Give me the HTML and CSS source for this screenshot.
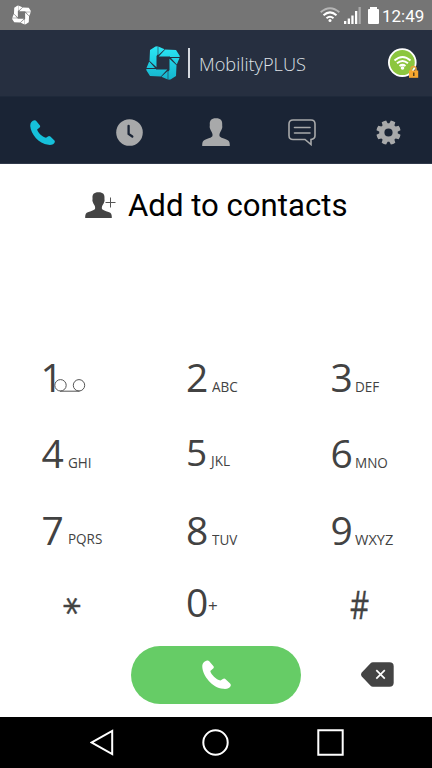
FILE: index.html
```html
<!DOCTYPE html>
<html lang="en">
<head>
<meta charset="utf-8">
<title>MobilityPLUS</title>
<link rel="stylesheet" href="styles.css">
</head>
<body>
<svg class="defs" width="0" height="0">
  <defs>
    <linearGradient id="cyan" gradientUnits="userSpaceOnUse" x1="0" y1="0" x2="0" y2="34"><stop offset="0" stop-color="#2be7f6"/><stop offset="1" stop-color="#14b3cc"/></linearGradient>
    <symbol id="mark" viewBox="0 0 34 34">
      <path d="M4 4 9.500.5 11.700.2V8.500L10.500 10V21.300L3.500 14.800zM12.300.5 18.600 3.200 12.300 9z"/>
      <path d="M30 4 33.500 9.500 33.800 11.100H24V10.500H12.700L19.200 3.500zM33.500 12 30.800 18.600 25 12z"/>
      <path d="M30 30 24.500 33.500 22.300 33.800V25.500L23.500 24V12.700L30.500 19.200zM21.700 33.500 15.400 30.800 21.700 25z"/>
      <path d="M4 30 .5 24.500 .2 22.900H10V23.500H21.300L14.800 30.500zM.5 22 3.200 15.400 9 22z"/>
    </symbol>
    <symbol id="phone" viewBox="0 0 28 28">
      <path d="M5.200 .4C2 .8 0 3.300.3 7 .8 15 9.500 26.800 20.500 27.800c3.800.4 6.700-.7 7.300-3.300.1-.7-.2-1.200-.7-1.700l-4.300-4.300c-.9-.9-1.800-.9-2.700-.1l-2.200 1.400C13.500 18.800 8.800 14 8 10.500L10.800 8.300c.8-.8.8-1.700.1-2.500L7 1.100C6.400.5 5.900.3 5.200.4z"/>
    </symbol>
    <symbol id="person" viewBox="0 0 28 28">
      <path d="M14 .3c-5 0-6.500 2.500-6.200 6.300.1 1.500-.4 2.100.1 3.700.4 1.500 1.100 2.700 1.900 3.900.8 1.500 1 3.200.4 4.300-1.700 1.700-6.500 2.500-8.400 3.900C.3 23.600.2 25.500.2 28h27.600c0-2.500-.1-4.400-1.600-5.600-1.900-1.400-6.700-2.200-8.400-3.900-.6-1.100-.4-2.800.4-4.300.8-1.200 1.500-2.400 1.900-3.900.5-1.600 0-2.200.1-3.700C20.500 2.800 19 .3 14 .3z"/>
    </symbol>
  </defs>
</svg>
<div class="screen">
  <div class="status">
    <svg class="status-mark" width="19" height="20"><use href="#mark"/></svg>
    <svg class="status-wifi" width="20" height="16" viewBox="0 0 20 16" fill="none" stroke="#fff" stroke-width="2">
      <path d="M.7 5.300Q10-2.800 19.300 5.300" stroke="#b5b5b5"/><path d="M3.500 8.200Q10 2.500 16.500 8.200M6.500 11.200Q10 8.200 13.500 11.200"/><circle cx="10" cy="13.500" r="1.500" fill="#fff" stroke="none"/>
    </svg>
    <svg class="status-signal" width="17" height="17" viewBox="0 0 17 17" fill="#fff">
      <path d="M0 14h2.300v3H0zM3.700 11.500H6V17H3.700zM7.300 8.500h2.300V17H7.300zM11 4h2.300v13H11z"/><path fill="#aaa" d="M14.500 0h2.300v17h-2.300z"/>
    </svg>
    <svg class="status-battery" width="11" height="17" viewBox="0 0 11 17"><path fill="#fff" d="M2 0h7v2h1q1 0 1 1V16q0 1-1 1H1q-1 0-1-1V3q0-1 1-1h1z"/></svg>
    <span class="clock">12:49</span>
  </div>
  <header class="header">
    <svg class="logo" width="34" height="34"><use href="#mark"/></svg>
    <span class="divider"></span>
    <span class="brand">MobilityPLUS</span>
    <svg class="online" width="31" height="31" viewBox="0 0 31 31">
      <circle cx="14.300" cy="14.600" r="13.400" fill="#8cc63f" stroke="#fff" stroke-width="1.800"/>
      <g fill="none" stroke="#fff" stroke-width="2"><path d="M6.500 12.500Q14.500 5.500 22.500 12.500M9 15.300Q14.500 10.800 20 15.300M11.500 18Q14.500 15.700 17.500 18"/></g>
      <circle cx="14.500" cy="20" r="1.800" fill="#fff"/>
      <path d="M23 23v-2a2.500 2.500 0 0 1 5 0v2" fill="none" stroke="#e9a23b" stroke-width="1.500"/>
      <path d="M21 22.500h9.200v7.300H21z" fill="#f8a72f"/><path d="M25 24.500h1.500v3.500H25z" fill="#56401d"/>
    </svg>
  </header>
  <nav class="tabs">
    <a class="tab active"><svg width="25" height="25" viewBox="0 0 25 25"><use href="#phone" width="25" height="25"/></svg></a>
    <a class="tab"><svg width="27" height="27" viewBox="0 0 27 27"><circle cx="13.500" cy="13.500" r="13.300"/><path d="M12.600 6.800v8.200l3.700 2.500" fill="none" stroke="#1a2435" stroke-width="2.300" stroke-linecap="round"/></svg></a>
    <a class="tab"><svg width="28" height="28"><use href="#person"/></svg></a>
    <a class="tab"><svg width="28" height="27" viewBox="0 0 28 27" fill="none" stroke="#a8a9aa" stroke-width="1.600"><path d="M5 1h18q4 0 4 4v11.500q0 3.500-4 4v5L17 20.500H5q-4 0-4-4V5q0-4 4-4z"/><path d="M6.500 8.500h15.500M6.500 14h15.500" stroke-linecap="round"/></svg></a>
    <a class="tab"><svg width="25" height="25" viewBox="-12.500 -12.500 25 25">
      <circle r="6.700" fill="none" stroke="#a8a9aa" stroke-width="5.200"/>
      <g transform="rotate(22.500)"><path id="pair" d="M-2.800-8-2.400-12q2.400-.6 4.800 0L2.800-8zM-2.800 8-2.400 12q2.400.6 4.800 0L2.800 8z"/><use href="#pair" transform="rotate(45)"/><use href="#pair" transform="rotate(90)"/><use href="#pair" transform="rotate(135)"/></g></svg></a>
  </nav>
  <main class="dialer">
    <div class="add">
      <svg width="31" height="27" viewBox="0 0 31 27"><svg width="27" height="26" preserveAspectRatio="none" viewBox="0 0 28 28"><use href="#person" width="28" height="28"/></svg><path d="M20.500 10.500h10M25.500 5.500v10" stroke="#555" stroke-width="1"/></svg>
      <span>Add to contacts</span>
    </div>
    <div class="keys">
      <div class="key one"><b>1</b><svg class="voicemail" width="32" height="13" viewBox="0 0 32 13" fill="none" stroke="#555" stroke-width="1"><circle cx="6.500" cy="6.300" r="5.700"/><circle cx="25" cy="6.300" r="5.700"/><path d="M6 12.200h19.500"/></svg></div>
      <div class="key"><b>2</b><i>ABC</i></div>
      <div class="key"><b>3</b><i class="near">DEF</i></div>
      <div class="key"><b>4</b><i>GHI</i></div>
      <div class="key five"><b>5</b><i>JKL</i></div>
      <div class="key"><b>6</b><i class="near">MNO</i></div>
      <div class="key seven"><b>7</b><i>PQRS</i></div>
      <div class="key"><b>8</b><i>TUV</i></div>
      <div class="key nine"><b>9</b><i class="near">WXYZ</i></div>
      <div class="key star"><b>*</b></div>
      <div class="key zero"><b>0</b><i>+</i></div>
      <div class="key hash"><b>#</b></div>
    </div>
    <div class="actions">
      <button class="call"><svg width="29" height="29"><use href="#phone"/></svg></button>
      <svg class="erase" width="33" height="25" viewBox="0 0 33 25"><path fill="#444" d="M12 .3h16.500q4.200 0 4.200 4.200v16q0 4.200-4.200 4.200H12q-1.500 0-2.700-1.200L.8 14.500q-1.500-2 0-4L9.300 1.500Q10.500.3 12 .3z"/><path d="M15.300 8.200l8.500 8.500M23.800 8.200l-8.500 8.500" stroke="#fff" stroke-width="1.700"/></svg>
    </div>
  </main>
  <footer class="system">
    <svg width="24" height="27" viewBox="0 0 24 27"><path d="M22.200 2v23L1.800 13.500z"/></svg>
    <svg width="27" height="27" viewBox="0 0 27 27"><circle cx="13.500" cy="13.500" r="12.200"/></svg>
    <svg width="27" height="27" viewBox="0 0 27 27"><path d="M1.300 1.300h24.400v24.400H1.300z"/></svg>
  </footer>
</div>
</body>
</html>
```
FILE: styles.css
```css
* { box-sizing: border-box; }
body { margin: 0; background: #fff; font-family: Roboto, sans-serif; }
svg { display: block; flex: none; }
.defs { position: absolute; }
.screen { width: 432px; height: 768px; display: flex; flex-direction: column; overflow: hidden; }
.status { height: 30px; background: #757575; display: flex; align-items: center; padding: 0 8px 0 12px; color: #fff; fill: #fff; }
.status-wifi { margin-left: 289px; }
.status-signal { margin-left: 4px; }
.status-battery { margin-left: 7px; }
.clock { margin-left: 3px; font-size: 17px; line-height: 28px; white-space: nowrap; padding-top: 2px; }
.header { height: 67px; background: #262f40; display: flex; align-items: center; padding-left: 146px; border-bottom: 1px solid #1e293a; }
.logo { fill: url(#cyan); }
.divider { width: 2px; height: 30px; background: #d5d9e0; margin-left: 8px; }
.brand { margin-left: 9px; width: 108px; font: 300 18.200px/30px "Open Sans", sans-serif; color: #dfe2e7; white-space: nowrap; padding-top: 1px; }
.online { margin-left: 81px; }
.tabs { height: 67px; background: #1a2435; display: grid; grid-template-columns: repeat(5, 86.400px); align-items: center; border-bottom: 1px solid #30394a; padding-top: 4px; }
.tab { display: flex; justify-content: center; fill: #a8a9aa; }
.active { fill: #16c0da; padding-right: 2px; }
.dialer { height: 553px; display: flex; flex-direction: column; }
.add { display: flex; height: 82px; padding-left: 85px; align-items: center; fill: #444; font-size: 31.150px; color: #000; }
.add span { margin-left: 12px; white-space: nowrap; padding-top: 1px; }
.keys { margin-top: 111px; display: grid; grid-template-columns: 144.500px 144.500px 143px; grid-template-rows: 76px 77px 72px 63.500px; color: #424242; font-family: "Open Sans", sans-serif; }
.key { display: flex; align-items: baseline; height: 40px; padding-left: 41.500px; white-space: nowrap; }
.key b { font-weight: 400; font-size: 39px; line-height: 40px; width: 22px; }
.key i { font-style: normal; font-size: 15px; transform: scaleX(.9); transform-origin: left; margin-left: 4px; }
.key .near { margin-left: 2px; }
.one b { width: 12px; margin-left: -1px; }
.voicemail { margin-left: 1.500px; }
.five b { font-size: 37px; }
.five i { margin-left: 2.500px; }
.five { margin-top: -1px; }
.seven i { transform: scaleX(.9) translateY(-1px); }
.nine i { transform: scaleX(.97); }
.star { padding-left: 57px; align-items: flex-start; }
.star b { width: 18px; margin-top: 3.500px; font: 36px/40px "DejaVu Sans", sans-serif; transform: rotate(90deg); -webkit-text-stroke: .4px #424242; }
.zero i { font-size: 17px; transform: translateY(-5px); margin-left: 0; }
.hash { padding-left: 61px; }
.hash b { transform: translateY(2px) scaleX(.76); transform-origin: left; -webkit-text-stroke: .4px #424242; }
.actions { display: flex; align-items: center; padding-left: 131px; }
.call { width: 170px; height: 58px; border: 0; border-radius: 29px; background: #66cc66; fill: #fff; display: flex; justify-content: center; align-items: center; padding: 0; }
.erase { margin-left: 60px; }
.system { height: 51px; background: #000; display: flex; justify-content: space-between; align-items: center; padding: 0 88px 0 90px; fill: none; stroke: #fff; stroke-width: 2; }
```
